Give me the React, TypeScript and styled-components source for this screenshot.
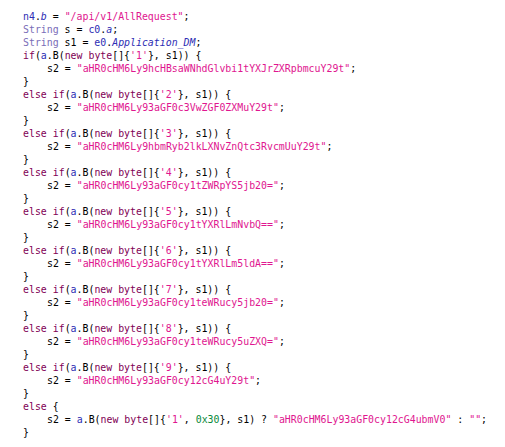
import React from "react";
import styled, { createGlobalStyle, css } from "styled-components";

const Global = createGlobalStyle`
  html, body { margin: 0; padding: 0; background: #ffffff; }
`;

type Kind = "pl" | "kw" | "ty" | "fld" | "fi" | "str" | "num";

const colors: Record<Kind, string> = {
  pl: "#000000",
  kw: "#7f0055",
  ty: "#7a6db8",
  fld: "#2d2db4",
  fi: "#2d2db4",
  str: "#e0168f",
  num: "#0a8a3a",
};

const Code = styled.div`
  font-family: "DejaVu Sans Mono", "Liberation Mono", monospace;
  font-size: 9.9px;
  line-height: 13px;
  padding: 10px 0 0 23px;
  white-space: pre;
  color: #000;
  background: #fff;
  width: 505px;
  height: 447px;
  box-sizing: border-box;
`;

const Line = styled.div<{ $indent: number }>`
  height: 13px;
  padding-left: ${(p) => p.$indent * 24}px;
`;

const Tok = styled.span<{ $kind: Kind }>`
  color: ${(p) => colors[p.$kind]};
  ${(p) =>
    p.$kind === "fi" &&
    css`
      font-style: italic;
    `}
`;

type T = [Kind, string];
type L = { indent: number; toks: T[] };

const ifLine = (kwPrefix: boolean, n: string): L => ({
  indent: 0,
  toks: [
    ...(kwPrefix ? ([["kw", "else"], ["pl", " "]] as T[]) : []),
    ["kw", "if"],
    ["pl", "("],
    ["fld", "a"],
    ["pl", ".B("],
    ["kw", "new"],
    ["pl", " "],
    ["kw", "byte"],
    ["pl", "[]{"],
    ["str", `'${n}'`],
    ["pl", "}, s1)) {"],
  ],
});

const assign = (v: string): L => ({
  indent: 1,
  toks: [
    ["pl", "s2 = "],
    ["str", `"${v}"`],
    ["pl", ";"],
  ],
});

const close: L = { indent: 0, toks: [["pl", "}"]] };

const values = [
  "aHR0cHM6Ly9hcHBsaWNhdGlvbi1tYXJrZXRpbmcuY29t",
  "aHR0cHM6Ly93aGF0c3VwZGF0ZXMuY29t",
  "aHR0cHM6Ly9hbmRyb2lkLXNvZnQtc3RvcmUuY29t",
  "aHR0cHM6Ly93aGF0cy1tZWRpYS5jb20=",
  "aHR0cHM6Ly93aGF0cy1tYXRlLmNvbQ==",
  "aHR0cHM6Ly93aGF0cy1tYXRlLm5ldA==",
  "aHR0cHM6Ly93aGF0cy1teWRucy5jb20=",
  "aHR0cHM6Ly93aGF0cy1teWRucy5uZXQ=",
  "aHR0cHM6Ly93aGF0cy12cG4uY29t",
];

const lines: L[] = [
  {
    indent: 0,
    toks: [
      ["fld", "n4"],
      ["pl", "."],
      ["fi", "b"],
      ["pl", " = "],
      ["str", '"/api/v1/AllRequest"'],
      ["pl", ";"],
    ],
  },
  {
    indent: 0,
    toks: [
      ["ty", "String"],
      ["pl", " s = "],
      ["fld", "c0"],
      ["pl", "."],
      ["fi", "a"],
      ["pl", ";"],
    ],
  },
  {
    indent: 0,
    toks: [
      ["ty", "String"],
      ["pl", " s1 = "],
      ["fld", "e0"],
      ["pl", "."],
      ["fi", "Application_DM"],
      ["pl", ";"],
    ],
  },
  ...values.flatMap((v, i) => [ifLine(i > 0, String(i + 1)), assign(v), close]),
  { indent: 0, toks: [["kw", "else"], ["pl", " {"]] },
  {
    indent: 1,
    toks: [
      ["pl", "s2 = "],
      ["fld", "a"],
      ["pl", ".B("],
      ["kw", "new"],
      ["pl", " "],
      ["kw", "byte"],
      ["pl", "[]{"],
      ["str", "'1'"],
      ["pl", ", "],
      ["num", "0x30"],
      ["pl", "}, s1) ? "],
      ["str", '"aHR0cHM6Ly93aGF0cy12cG4ubmV0"'],
      ["pl", " : "],
      ["str", '""'],
      ["pl", ";"],
    ],
  },
  close,
];

export default function App() {
  return (
    <>
      <Global />
      <Code>
        {lines.map((l, i) => (
          <Line key={i} $indent={l.indent}>
            {l.toks.map(([k, t], j) => (
              <Tok key={j} $kind={k}>
                {t}
              </Tok>
            ))}
          </Line>
        ))}
      </Code>
    </>
  );
}
